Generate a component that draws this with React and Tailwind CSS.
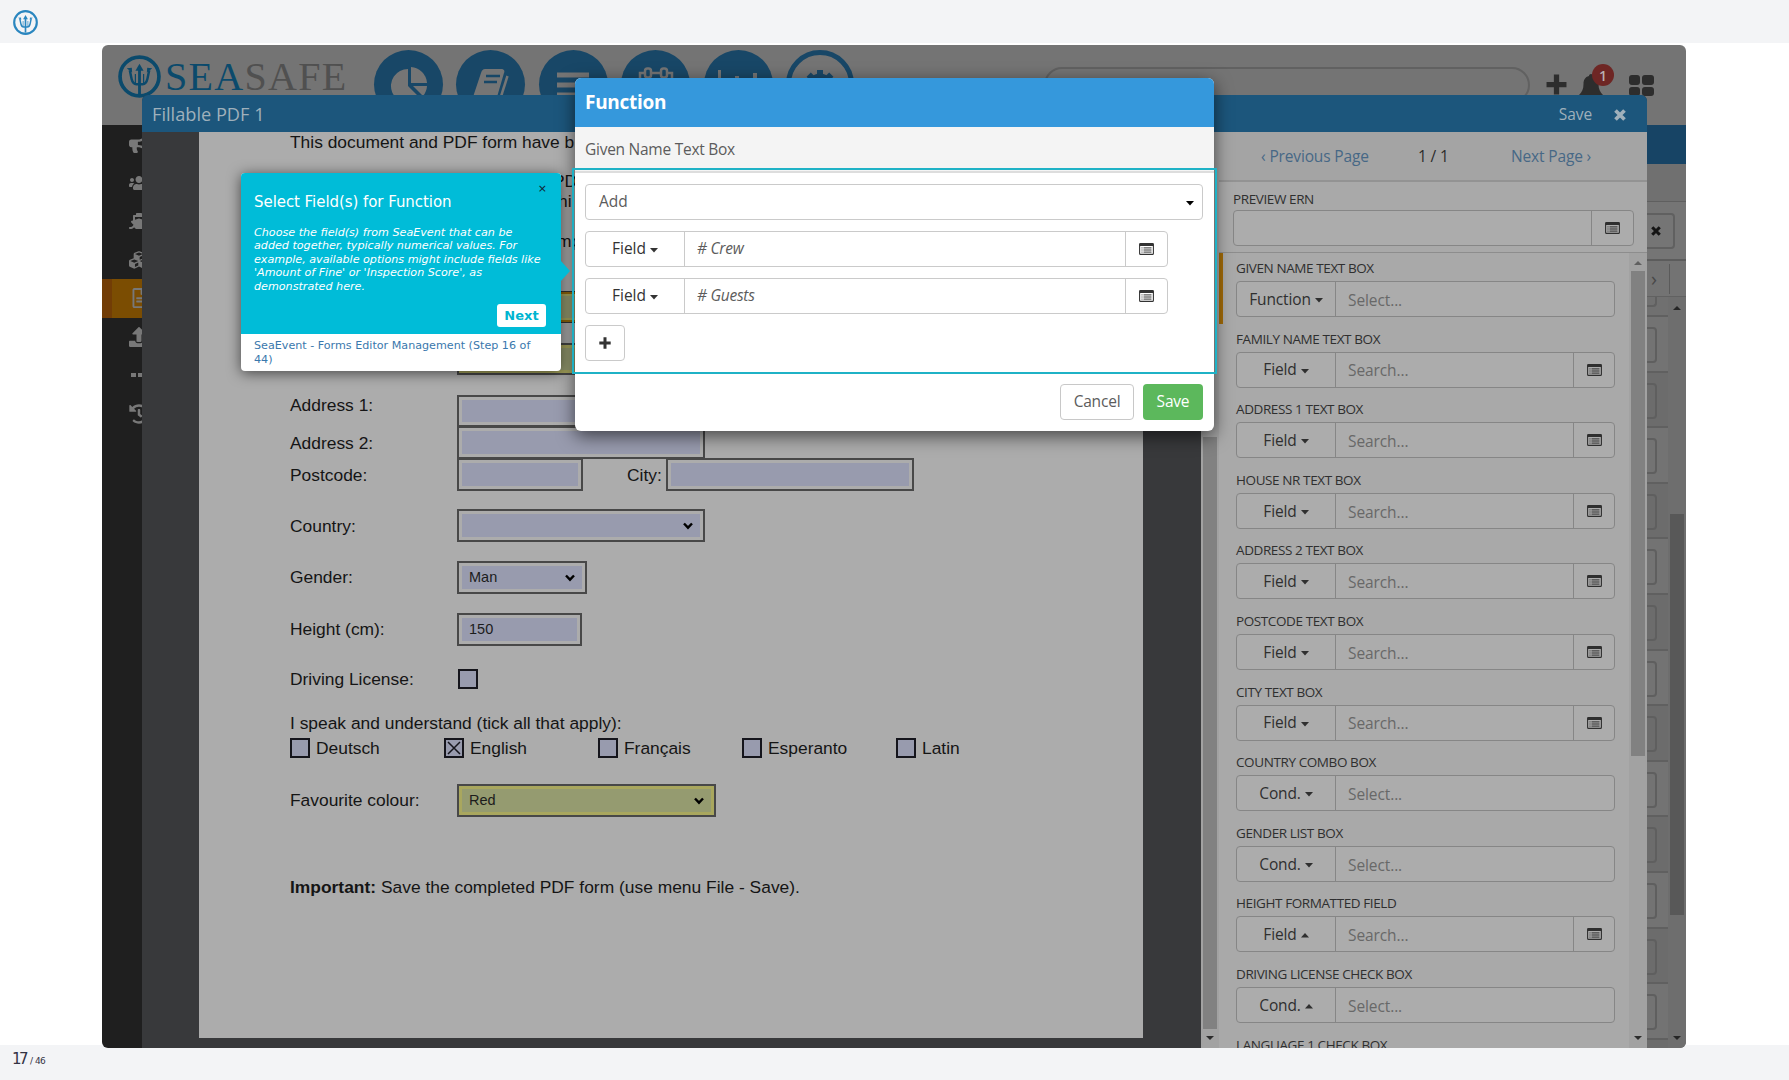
// App.jsx
import { FaBullhorn, FaUsers, FaShip, FaCubes, FaRegFileAlt, FaUpload, FaHistory } from "react-icons/fa";

const sidebarIcons = [FaBullhorn, FaUsers, FaShip, FaCubes, FaRegFileAlt, FaUpload, Dots, FaHistory];

const mappings = [
  { label: "GIVEN NAME TEXT BOX", type: "Function", active: true },
  { label: "FAMILY NAME TEXT BOX", type: "Field" },
  { label: "ADDRESS 1 TEXT BOX", type: "Field" },
  { label: "HOUSE NR TEXT BOX", type: "Field" },
  { label: "ADDRESS 2 TEXT BOX", type: "Field" },
  { label: "POSTCODE TEXT BOX", type: "Field" },
  { label: "CITY TEXT BOX", type: "Field" },
  { label: "COUNTRY COMBO BOX", type: "Cond." },
  { label: "GENDER LIST BOX", type: "Cond." },
  { label: "HEIGHT FORMATTED FIELD", type: "Field", up: true },
  { label: "DRIVING LICENSE CHECK BOX", type: "Cond.", up: true },
];

function Trident({ className }) {
  return (
    <svg viewBox="0 0 42 42" className={className} fill="none" stroke="currentColor">
      <circle cx="21" cy="21" r="19" strokeWidth="3.6" />
      <path d="M21 14V38" strokeWidth="2.8" />
      <path d="M21 8.5l4 7h-8z" fill="currentColor" stroke="none" />
      <path d="M11.5 15l1.800 8.500c.8 3.500 2 5 4.700 5h6c2.700 0 3.900-1.500 4.700-5L30.500 15" strokeWidth="2.4" />
      <path d="M8.500 13l5-.5.3 4.500zM33.500 13l-5-.5-.3 4.500z" fill="currentColor" stroke="none" />
      <path d="M17 18.500V28M25 18.500V28" strokeWidth="1.2" />
    </svg>
  );
}

function Dots({ className }) {
  return (
    <svg viewBox="0 0 20 20" className={className} fill="currentColor">
      <path d="M2 8h5v4H2zM9 8h5v4H9zM16 8h4v4h-4z" />
    </svg>
  );
}

function Plus({ className }) {
  return (
    <svg viewBox="0 0 12 12" className={className} stroke="currentColor" strokeWidth="3">
      <path d="M6 0.300v11.400M0.300 6h11.400" />
    </svg>
  );
}

function Cross({ className }) {
  return (
    <svg viewBox="0 0 12 12" className={className} stroke="currentColor" strokeWidth="3.7">
      <path d="M1.500 1.500l9 9M10.500 1.500l-9 9" />
    </svg>
  );
}

function Caret({ up }) {
  return (
    <svg viewBox="0 0 8 5" className="w-2 h-[5px] ml-1 mt-0.5 shrink-0" fill="currentColor">
      <path d={up ? "M0 4.500h8L4 0z" : "M0 0h8L4 4.500z"} />
    </svg>
  );
}

function ListIcon() {
  return (
    <svg viewBox="0 0 15 12" className="w-[15px] h-3" fill="none" stroke="currentColor">
      <rect x="0.600" y="0.600" width="13.800" height="10.800" rx="1" strokeWidth="1.1" />
      <path d="M0.500 1.600h14" strokeWidth="2.8" />
      <path d="M2.500 4.900h1M2.500 7h1M2.500 9.100h1M4.500 4.900h8M4.500 7h8M4.500 9.100h8" strokeWidth="1" />
    </svg>
  );
}

function Arrow({ up, className }) {
  return (
    <svg viewBox="0 0 8 4" className={"w-2 h-1 " + className} fill="currentColor">
      <path d={up ? "M0 4h8L4 0z" : "M0 0h8L4 4z"} />
    </svg>
  );
}

function AppHeader() {
  return (
    <div className="flex h-20 bg-[#747474]">
      <Trident className="w-[43px] h-[43px] ml-4 mt-2.5 text-[#0b4a6c]" />
      <div className="ml-1 mt-[9px] w-[183px] h-[45px] leading-[45px] text-[40px] tracking-[1.3px] font-['Liberation_Serif',serif] text-[#0b4a6c]">
        SEA<span className="text-[#505050]">SAFE</span>
      </div>
      <div className="flex gap-[13.4px] ml-[26px] mt-[5px] text-[#757575]">
        <div className="w-[69px] h-[69px] rounded-full bg-[#184767] flex justify-center">
          <svg viewBox="0 0 40 40" className="w-10 h-10 mt-[15px]" fill="currentColor">
            <path d="M19 4v17l12 12A17 17 0 1 1 19 4z" />
            <path d="M22 2a17 17 0 0 1 16 16H22z" />
            <path d="M24 21h14a17 17 0 0 1-4 10z" />
          </svg>
        </div>
        <div className="w-[69px] h-[69px] rounded-full bg-[#184767] flex justify-center">
          <svg viewBox="0 0 40 40" className="w-10 h-10 mt-[15px]" fill="currentColor">
            <path d="M14 4h16c3 0 4 2 3 4l-7 24H2l8-24c1-3 2-4 4-4z" />
            <path d="M36.500 11l-7 22" stroke="currentColor" strokeWidth="2.5" fill="none" />
            <path d="M15 11h14M13 17h13" stroke="#184767" strokeWidth="2.3" fill="none" />
          </svg>
        </div>
        <div className="w-[69px] h-[69px] rounded-full bg-[#184767] flex justify-center">
          <svg viewBox="0 0 32 30" className="w-8 h-[30px] mt-[22px]" stroke="currentColor" strokeWidth="5">
            <path d="M0 3h32M0 13h32M0 23h32" />
          </svg>
        </div>
        <div className="w-[69px] h-[69px] rounded-full bg-[#184767] flex justify-center">
          <svg viewBox="0 0 36 36" className="w-9 h-9 mt-[17px]" fill="none" stroke="currentColor" strokeWidth="2.5">
            <path d="M7 6H2v28h32V6h-5M14 6h8" />
            <rect x="7" y="1.500" width="6" height="9" rx="2.500" />
            <rect x="23" y="1.500" width="6" height="9" rx="2.500" />
          </svg>
        </div>
        <div className="w-[69px] h-[69px] rounded-full bg-[#184767] flex justify-center">
          <svg viewBox="0 0 40 36" className="w-10 h-9 mt-5" fill="none" stroke="currentColor">
            <path d="M1.500 0v34h38" strokeWidth="3" />
            <path d="M19 6v24M29 12v18M37 3v28" strokeWidth="4" />
          </svg>
        </div>
        <div className="w-[68px] h-[69px] rounded-full border-[5px] border-[#184767] flex justify-center text-[#184767]">
          <svg viewBox="0 0 34 34" className="w-[34px] h-[34px] mt-[14px]" fill="none" stroke="currentColor">
            <circle cx="17" cy="17" r="9" strokeWidth="7" />
            <path d="M17 1v8M5.700 5.700l6 6M28.300 5.700l-6 6M1 17h8M33 17h-8" strokeWidth="6" />
          </svg>
        </div>
      </div>
      <div className="ml-[190px] mt-[22px] w-[486px] h-9 rounded-full border-2 border-[#616161]" />
      <Plus className="w-[21px] h-[21px] ml-4 mt-[29px] text-[#2d2d2d]" />
      <div className="relative ml-3 mt-[29px]">
        <svg viewBox="0 0 24 26" className="w-6 h-[26px] text-[#2d2d2d]" fill="currentColor">
          <path d="M12 0c1.500 0 2 1 2 2 4 1 5.500 4 5.500 8 0 5 1.500 8 4.500 11H0c3-3 4.500-6 4.500-11 0-4 1.500-7 5.500-8 0-1 .5-2 2-2z" />
        </svg>
        <div className="absolute -top-[10px] left-[13px] w-[22px] h-[22px] rounded-full bg-[#6e2624] text-[#b8b0b0] text-[14px] font-semibold flex items-center justify-center">1</div>
      </div>
      <div className="grid grid-cols-2 gap-0.5 ml-[26px] mt-[30px] w-[25px] h-[21px]">
        {[0, 1, 2, 3].map((i) => (
          <div key={i} className="rounded-[3px] bg-[#2d2d2d]" />
        ))}
      </div>
    </div>
  );
}

function Sidebar() {
  return (
    <div className="w-10 bg-[#1f1f1f] text-[#787878]">
      {sidebarIcons.map((Icon, i) => (
        <div
          key={i}
          className={i === 4 ? "flex items-center h-[38.5px] pl-[18px] border-l-10 border-[#723d06] bg-[#7b4d02]" : "flex items-center pl-[27px] h-[38.5px]"}
        >
          <Icon className="w-5 h-5 shrink-0" />
        </div>
      ))}
    </div>
  );
}

// the slice of the forms list that sticks out behind the editor window
function FormsListEdge() {
  return (
    <div className="ml-auto w-[39px] flex flex-col bg-[#707070]">
      <div className="h-[39px] shrink-0 bg-[#174465]" />
      <div className="h-[38px] shrink-0 border-b border-[#5f5f5f]" />
      <div className="h-[59px] shrink-0 border-b-2 border-[#5c5c5c] bg-[#757575] pt-[11px]">
        <div className="w-7 h-9 rounded-r border-2 border-l-0 border-[#606060] flex items-center pl-1 text-[#151515]">
          <Cross className="w-2.5 h-2.5" />
        </div>
      </div>
      <div className="h-9 shrink-0 border-b border-[#616161] bg-[#737373] flex items-center text-[#484848]">
        <span className="pl-1 text-xl leading-none w-[22px]">›</span>
        <div className="h-[30px] border-l border-[#5a5a5a]" />
      </div>
      <div className="flex flex-1 min-h-0">
        <div className="w-[21px] overflow-hidden">
          <div className="h-5 border-b-2 border-[#606060]">
            <div className="w-2.5 h-2.5 rounded-br border-b-2 border-r-2 border-[#606060]" />
          </div>
          {Array.from({ length: 14 }, (_, i) => (
            <div key={i} className="h-[55.6px] border-b-2 border-[#606060] pt-[10px] odd:bg-[#6c6c6c] even:bg-[#737373]">
              <div className="w-2.5 h-9 rounded-r border-2 border-l-0 border-[#5f5f5f]" />
            </div>
          ))}
        </div>
        <div className="flex-1 flex flex-col items-center bg-[#6e6e6e] text-[#262626]">
          <Arrow up className="mt-[9px]" />
          <div className="mt-[204px] h-[401px] w-3.5 bg-[#585858]" />
          <Arrow className="mt-[121px]" />
        </div>
      </div>
    </div>
  );
}

function FormBox({ className, yellow, select, children }) {
  return (
    <div className={"shrink-0 border-2 border-[#484848] p-[3px] " + (yellow ? "bg-[#a9a75e] " : "") + className}>
      <div className={"h-full flex items-center px-[7px] text-[14.5px] text-[#1c1c1c] " + (yellow ? "bg-[#959b70]" : "bg-[#989bae]")}>
        {children}
        {select && (
          <svg viewBox="0 0 10 8" className="w-2.5 h-2 ml-auto" fill="none" stroke="#000" strokeWidth="2.4">
            <path d="M1 1.500l4 4.200 4-4.200" />
          </svg>
        )}
      </div>
    </div>
  );
}

function CheckBox({ checked }) {
  return (
    <div className="w-5 h-5 shrink-0 border-2 border-[#15151c] bg-[#989bae]">
      {checked && (
        <svg viewBox="0 0 16 16" className="w-4 h-4" stroke="#15151c" strokeWidth="1.5">
          <path d="M2 2l12 12M14 2L2 14" />
        </svg>
      )}
    </div>
  );
}

function PdfPage() {
  return (
    <div className="ml-[57px] w-[944px] h-[906px] pl-[91px] bg-[#acacac] overflow-hidden font-['Liberation_Sans',Arial,sans-serif] text-[17.4px] text-[#151515] whitespace-nowrap">
      <div className="h-5 leading-5">This document and PDF form have b</div>
      <div className="mt-[19px] h-5 leading-5 pl-[263px]">PD</div>
      <div className="h-5 leading-[21px] pl-[268px]">hi</div>
      <div className="mt-[21px] h-5 leading-[18px] pl-[267px]">mp</div>
      <div className="pl-[167px] pt-[39px]">
        <div className="w-[248px] h-8 border border-[#333] bg-[#92680c] p-0.5">
          <div className="h-full bg-[#a9a75e] p-0.5">
            <div className="h-full bg-[#959b70]" />
          </div>
        </div>
      </div>
      <FormBox yellow className="ml-[167px] mt-5 w-[248px] h-8" />
      <div className="flex mt-5 h-8">
        <span className="w-[167px] leading-5">Address 1:</span>
        <FormBox className="w-[248px]" />
      </div>
      <div className="flex items-center -mt-px h-[33px]">
        <span className="w-[167px] pt-0.5">Address 2:</span>
        <FormBox className="w-[248px] h-[33px]" />
      </div>
      <div className="flex items-center -mt-px h-[33px]">
        <span className="w-[167px] pt-0.5">Postcode:</span>
        <FormBox className="w-[126px] h-[33px]" />
        <span className="w-[83px] pl-[44px] pt-0.5">City:</span>
        <FormBox className="w-[248px] h-[33px]" />
      </div>
      <div className="flex items-center mt-[18px] h-[33px]">
        <span className="w-[167px] pt-0.5">Country:</span>
        <FormBox select className="w-[248px] h-[33px]" />
      </div>
      <div className="flex items-center mt-[19px] h-[33px]">
        <span className="w-[167px]">Gender:</span>
        <FormBox select className="w-[130px] h-[33px]">Man</FormBox>
      </div>
      <div className="flex items-center mt-[19px] h-[33px]">
        <span className="w-[167px]">Height (cm):</span>
        <FormBox className="w-[125px] h-[33px]">150</FormBox>
      </div>
      <div className="flex items-center mt-[23px] h-5">
        <span className="w-[168px]">Driving License:</span>
        <CheckBox />
      </div>
      <div className="mt-[25px] h-5 leading-[19px]">I speak and understand (tick all that apply):</div>
      <div className="flex items-center mt-[4px] h-5">
        <div className="flex items-center gap-1.5 w-[154px]"><CheckBox />Deutsch</div>
        <div className="flex items-center gap-1.5 w-[154px]"><CheckBox checked />English</div>
        <div className="flex items-center gap-1.5 w-36"><CheckBox />Français</div>
        <div className="flex items-center gap-1.5 w-[154px]"><CheckBox />Esperanto</div>
        <div className="flex items-center gap-1.5"><CheckBox />Latin</div>
      </div>
      <div className="flex items-center mt-[26px] h-[33px]">
        <span className="w-[167px]">Favourite colour:</span>
        <FormBox yellow select className="w-[259px] h-[33px]">Red</FormBox>
      </div>
      <div className="mt-[60px] h-5 leading-5 tracking-[0.01px]">
        <b>Important:</b> Save the completed PDF form (use menu File - Save).
      </div>
    </div>
  );
}

function MappingRow({ label, type, active, up }) {
  return (
    <div className="h-[70.6px] shrink-0 relative pl-[17px] pt-[7px] text-[#2f2f2f]">
      {active && <div className="absolute left-0 top-0 h-[71px] w-1 bg-[#a06a08]" />}
      <div className="text-[13.5px] leading-[17px] tracking-[-0.4px]">{label}</div>
      <div className="mt-1 flex w-[379px] h-9 rounded border border-[#868686] bg-[#acacac]">
        <div className="w-[99px] flex items-center justify-center pt-px text-[15.5px] tracking-[-0.15px] border-r border-[#868686]">
          {type}
          <Caret up={up} />
        </div>
        <div className="flex-1 flex items-center px-3 pt-[3px] text-[15.5px] tracking-[-0.1px] text-[#686868]">{type === "Field" ? "Search..." : "Select..."}</div>
        {type === "Field" && (
          <div className="w-[41px] flex items-center justify-center border-l border-[#868686]">
            <ListIcon />
          </div>
        )}
      </div>
    </div>
  );
}

function MappingPanel() {
  return (
    <div className="flex-1 flex flex-col min-w-0 bg-[#a9a9a9]">
      <div className="h-[50px] shrink-0 flex items-center pl-[42px] pt-0.5 text-[15.5px] tracking-[-0.15px] text-[#476886] bg-[#a4a4a4] border-b-2 border-[#939393] whitespace-nowrap">
        <span className="w-[157px]">‹ Previous Page</span>
        <span className="w-[93px] text-[#2b2b2b]">1 / 1</span>
        <span>Next Page ›</span>
      </div>
      <div className="h-[71px] shrink-0 pl-[14px] pt-[9px] border-b border-[#8d8d8d] text-[#2f2f2f]">
        <div className="text-[13.5px] leading-4 tracking-[-0.4px]">PREVIEW ERN</div>
        <div className="mt-[3px] w-[401px] h-9 flex justify-end rounded border border-[#868686] bg-[#acacac]">
          <div className="w-[42px] flex items-center justify-center border-l border-[#868686]">
            <ListIcon />
          </div>
        </div>
      </div>
      <div className="flex flex-1 min-h-0">
        <div className="flex-1 flex flex-col overflow-hidden">
          {mappings.map((m) => (
            <MappingRow key={m.label} {...m} />
          ))}
          <div className="pl-[17px] pt-[7px] text-[13.5px] leading-[17px] tracking-[-0.4px] text-[#2f2f2f]">LANGUAGE 1 CHECK BOX</div>
        </div>
        <div className="w-[18px] flex flex-col items-center bg-[#a2a2a2] text-[#2c2c2c]">
          <Arrow up className="mt-2 text-[#606060]" />
          <div className="mt-[6px] h-[485px] w-3.5 bg-[#818181]" />
          <Arrow className="mt-[280px]" />
        </div>
      </div>
    </div>
  );
}

function EditorWindow() {
  return (
    <div className="absolute left-10 top-[50px] w-[1505px] h-[953px] rounded-t-md overflow-hidden flex flex-col bg-[#38393b]">
      <div className="h-[37px] shrink-0 flex items-center pl-2.5 pt-0.5 bg-[#1c567c] text-[#9fb0bb]">
        <span className="text-[18.2px]">Fillable PDF 1</span>
        <span className="ml-auto text-[15.5px] tracking-[-0.1px]">Save</span>
        <Cross className="w-3 h-3 ml-[22px] mr-[21px]" />
      </div>
      <div className="flex flex-1 min-h-0">
        <PdfPage />
        <div className="ml-auto w-[18px] flex flex-col items-center bg-[#a2a2a2] text-[#2c2c2c]">
          <div className="mt-[305px] h-[592px] shrink-0 w-3.5 bg-[#818181]" />
          <Arrow className="mt-[7px]" />
        </div>
        <div className="w-[428px] flex">
          <MappingPanel />
        </div>
      </div>
    </div>
  );
}

function FunctionField({ value }) {
  return (
    <div className="mt-[11px] flex w-[583px] h-9 rounded border border-[#cacaca] text-[15.5px]">
      <div className="w-[99px] flex items-center justify-center text-[#333] border-r border-[#cacaca]">
        Field
        <Caret />
      </div>
      <div className="flex-1 flex items-center px-3 italic tracking-[-0.25px] text-[#5c5c5c]">{value}</div>
      <div className="w-[42px] flex items-center justify-center text-[#333] border-l border-[#cacaca]">
        <ListIcon />
      </div>
    </div>
  );
}

function FunctionModal() {
  return (
    <div className="absolute left-[473px] top-[33px] w-[639px] h-[353px] rounded-md bg-white shadow-[0_5px_18px_rgba(0,0,0,0.6)] text-[#5c5c5c]">
      <div className="h-[49px] rounded-t-md bg-[#3598dc] flex items-center pl-[10px] text-[19px] tracking-[-0.3px] font-bold text-white">Function</div>
      <div className="h-[46px] bg-[#f4f4f4] border-b-2 border-[#ddd] flex items-center pl-[10px] pt-0.5 text-[15.5px] tracking-[-0.26px]">Given Name Text Box</div>
      <div className="pl-[10px] pr-[11px] pt-[11px]">
        <div className="w-[618px] h-9 rounded border border-[#cacaca] flex items-center pl-[13px] pr-2 text-[15.5px]">
          Add
          <span className="ml-auto text-black"><Caret /></span>
        </div>
        <FunctionField value="# Crew" />
        <FunctionField value="# Guests" />
        <div className="mt-[11px] w-10 h-9 rounded border border-[#cacaca] flex items-center justify-center text-[#333]">
          <Plus className="w-3 h-3" />
        </div>
      </div>
      <div className="mt-[23px] pr-[11px] flex justify-end gap-[9px] text-[15.5px] tracking-[-0.2px]">
        <div className="w-[74px] h-9 rounded border border-[#c8c8c8] flex items-center justify-center">Cancel</div>
        <div className="w-[60px] h-9 rounded bg-[#5cb85c] text-white flex items-center justify-center">Save</div>
      </div>
      <div className="absolute -left-[3px] top-[90px] w-[645px] h-[206px] border-2 border-[#1fb2c6]" />
    </div>
  );
}

function TourTip() {
  return (
    <div className="absolute left-[139px] top-[128px] w-80 h-[198px] rounded bg-white shadow-[0_2px_14px_rgba(0,0,0,0.6)] font-['DejaVu_Sans',sans-serif] whitespace-nowrap">
      <div className="h-[161px] rounded-t bg-[#00bcd8] text-white pl-[13px] pt-[17px]">
        <div className="text-[15px] leading-6 tracking-[-0.06px]">Select Field(s) for Function</div>
        <div className="mt-[12px] text-[11.15px] leading-[13.4px] italic">
          Choose the field(s) from SeaEvent that can be<br />
          added together, typically numerical values. For<br />
          example, available options might include fields like<br />
          'Amount of Fine' or 'Inspection Score', as<br />
          demonstrated here.
        </div>
        <div className="mt-[11px] ml-[243px] w-[49px] h-[23px] rounded-[3px] bg-white text-[#00b5d1] text-[13px] font-bold flex items-center justify-center">Next</div>
      </div>
      <div className="pl-[13px] pt-[5px] text-[11.15px] leading-[14px] text-[#3a78ad]">
        SeaEvent - Forms Editor Management (Step 16 of<br />
        44)
      </div>
      <span className="absolute right-[14px] top-[9px] text-[11px] leading-[14px] text-[#123]">×</span>
      <svg viewBox="0 0 9 20" className="absolute -right-[9px] top-[88px] w-[9px] h-5" fill="#00bcd8">
        <path d="M0 0l9 10-9 10z" />
      </svg>
    </div>
  );
}

export default function App() {
  return (
    <div className="w-[1789px] h-[1080px] overflow-hidden flex flex-col bg-white font-['Open_Sans',sans-serif]">
      <div className="h-[43px] shrink-0 bg-[#f3f4f6] flex items-center pl-[13px] pt-px">
        <Trident className="w-[25px] h-[25px] text-[#2a86bf]" />
      </div>
      <div className="h-[1002px] shrink-0 pt-0.5 flex justify-center mr-px">
        <div className="relative w-[1584px] h-[1003px] shrink-0 rounded-md overflow-hidden flex flex-col">
          <AppHeader />
          <div className="flex flex-1 min-h-0">
            <Sidebar />
            <FormsListEdge />
          </div>
          <EditorWindow />
          <FunctionModal />
          <TourTip />
        </div>
      </div>
      <div className="flex-1 bg-[#f3f4f6] flex items-start pl-[12px] pt-1 font-['DejaVu_Sans',sans-serif] text-[#333344]">
        <span className="w-[14px] text-[15px] leading-[21px] tracking-[-2.6px]">17</span>
        <span className="ml-[4px] text-[9px] leading-[24px] tracking-[-0.5px]">/ 46</span>
      </div>
    </div>
  );
}
